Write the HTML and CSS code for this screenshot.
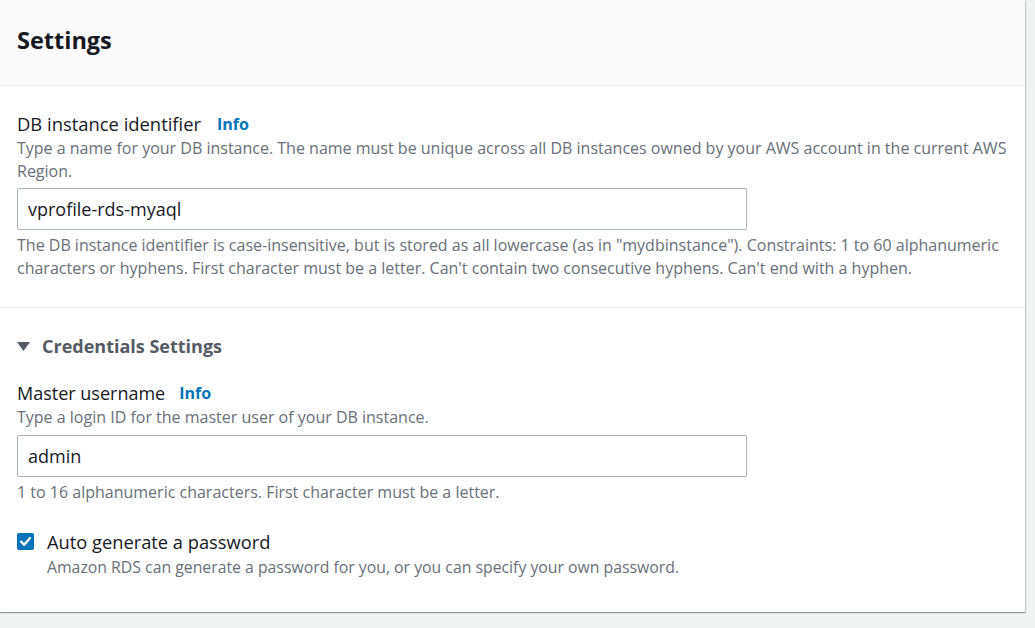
FILE: index.html
```html
<!DOCTYPE html>
<html lang="en">
<head>
<meta charset="utf-8">
<title>Settings</title>
<link rel="stylesheet" href="styles.css">
</head>
<body>
<div class="card">
  <div class="card-header">
    <h2 class="card-title">Settings</h2>
  </div>
  <div class="section section-first">
    <div class="label-row">
      <span class="label">DB instance identifier</span>
      <a class="info" href="#">Info</a>
    </div>
    <p class="desc">Type a name for your DB instance. The name must be unique across all DB instances owned by your AWS account in the current AWS Region.</p>
    <div class="input">vprofile-rds-myaql</div>
    <p class="hint">The DB instance identifier is case-insensitive, but is stored as all lowercase (as in "mydbinstance"). Constraints: 1 to 60 alphanumeric characters or hyphens. First character must be a letter. Can't contain two consecutive hyphens. Can't end with a hyphen.</p>
  </div>
  <div class="section section-second">
    <div class="expander">
      <svg class="caret" width="13" height="9" viewBox="0 0 13 9"><polygon points="0,0 13,0 6.5,9" fill="#545b64"/></svg>
      <span class="expander-title">Credentials Settings</span>
    </div>
    <div class="label-row label-row-2">
      <span class="label">Master username</span>
      <a class="info" href="#">Info</a>
    </div>
    <p class="desc">Type a login ID for the master user of your DB instance.</p>
    <div class="input">admin</div>
    <p class="hint">1 to 16 alphanumeric characters. First character must be a letter.</p>
    <div class="check-row">
      <span class="checkbox">
        <svg width="17" height="17" viewBox="0 0 17 17"><rect x="0" y="0" width="17" height="17" rx="2" fill="#0073bb"/><polyline points="4,8.5 7.2,11.8 13,5" fill="none" stroke="#fff" stroke-width="2.4" stroke-linecap="round" stroke-linejoin="round"/></svg>
      </span>
      <div class="check-text">
        <div class="check-label">Auto generate a password</div>
        <p class="check-desc">Amazon RDS can generate a password for you, or you can specify your own password.</p>
      </div>
    </div>
  </div>
</div>
</body>
</html>
```
FILE: styles.css
```css
* { box-sizing: border-box; }
html, body {
  margin: 0;
  padding: 0;
}
body {
  background: #f2f3f3;
  font-family: "Open Sans", "Noto Sans", sans-serif;
  color: #16191f;
  width: 1035px;
  height: 628px;
  overflow: hidden;
}
.card {
  width: 1025px;
  background: #fff;
  box-shadow: 0 1px 1px 0 rgba(0, 28, 36, 0.3), 1px 1px 1px 0 rgba(0, 28, 36, 0.15);
}
.card-header {
  height: 86px;
  background: #fafafa;
  border-bottom: 1px solid #eaeded;
  padding: 23px 17px 0;
}
.card-title {
  margin: 0;
  font-size: 23.5px;
  line-height: 34px;
  font-weight: 700;
  color: #16191f;
}
.section {
  padding: 27px 17px 27px;
}
.section-first {
  border-bottom: 1px solid #eaeded;
}
.section-second {
  padding-top: 26px;
  padding-bottom: 33px;
}
.label-row {
  display: flex;
  align-items: center;
  gap: 14px;
  height: 22px;
}
.label {
  font-size: 18px;
  line-height: 22px;
  color: #16191f;
}
.section-first .label-row {
  gap: 16px;
}
.section-first .label {
  font-size: 18.4px;
}
.info {
  font-size: 16px;
  font-weight: 700;
  color: #0073bb;
  text-decoration: none;
}
.desc {
  margin: 2px 0 0;
  font-size: 16px;
  line-height: 23px;
  color: #687078;
}
.input {
  margin-top: 5px;
  width: 730px;
  height: 42px;
  border: 1px solid #aab7b8;
  border-radius: 2px;
  padding: 0 10px;
  font-size: 18px;
  line-height: 40px;
  color: #16191f;
}
.hint {
  margin: 4px 0 0;
  font-size: 16px;
  line-height: 23px;
  color: #687078;
}
.expander {
  display: flex;
  align-items: center;
  gap: 12px;
  height: 24px;
}
.expander-title {
  font-size: 18px;
  font-weight: 700;
  line-height: 24px;
  color: #545b64;
}
.label-row-2 {
  margin-top: 24px;
}
.label-row-2 + .desc {
  margin-top: 2px;
}
.section-second .input {
  margin-top: 6px;
}
.check-row {
  margin-top: 27px;
  display: flex;
  gap: 13px;
}
.checkbox {
  display: block;
  width: 17px;
  height: 17px;
  margin-top: 2px;
}
.checkbox svg { display: block; }
.check-label {
  font-size: 18.3px;
  line-height: 22px;
  color: #16191f;
}
.check-desc {
  margin: 3px 0 0;
  font-size: 15.8px;
  line-height: 23px;
  color: #687078;
}
```
